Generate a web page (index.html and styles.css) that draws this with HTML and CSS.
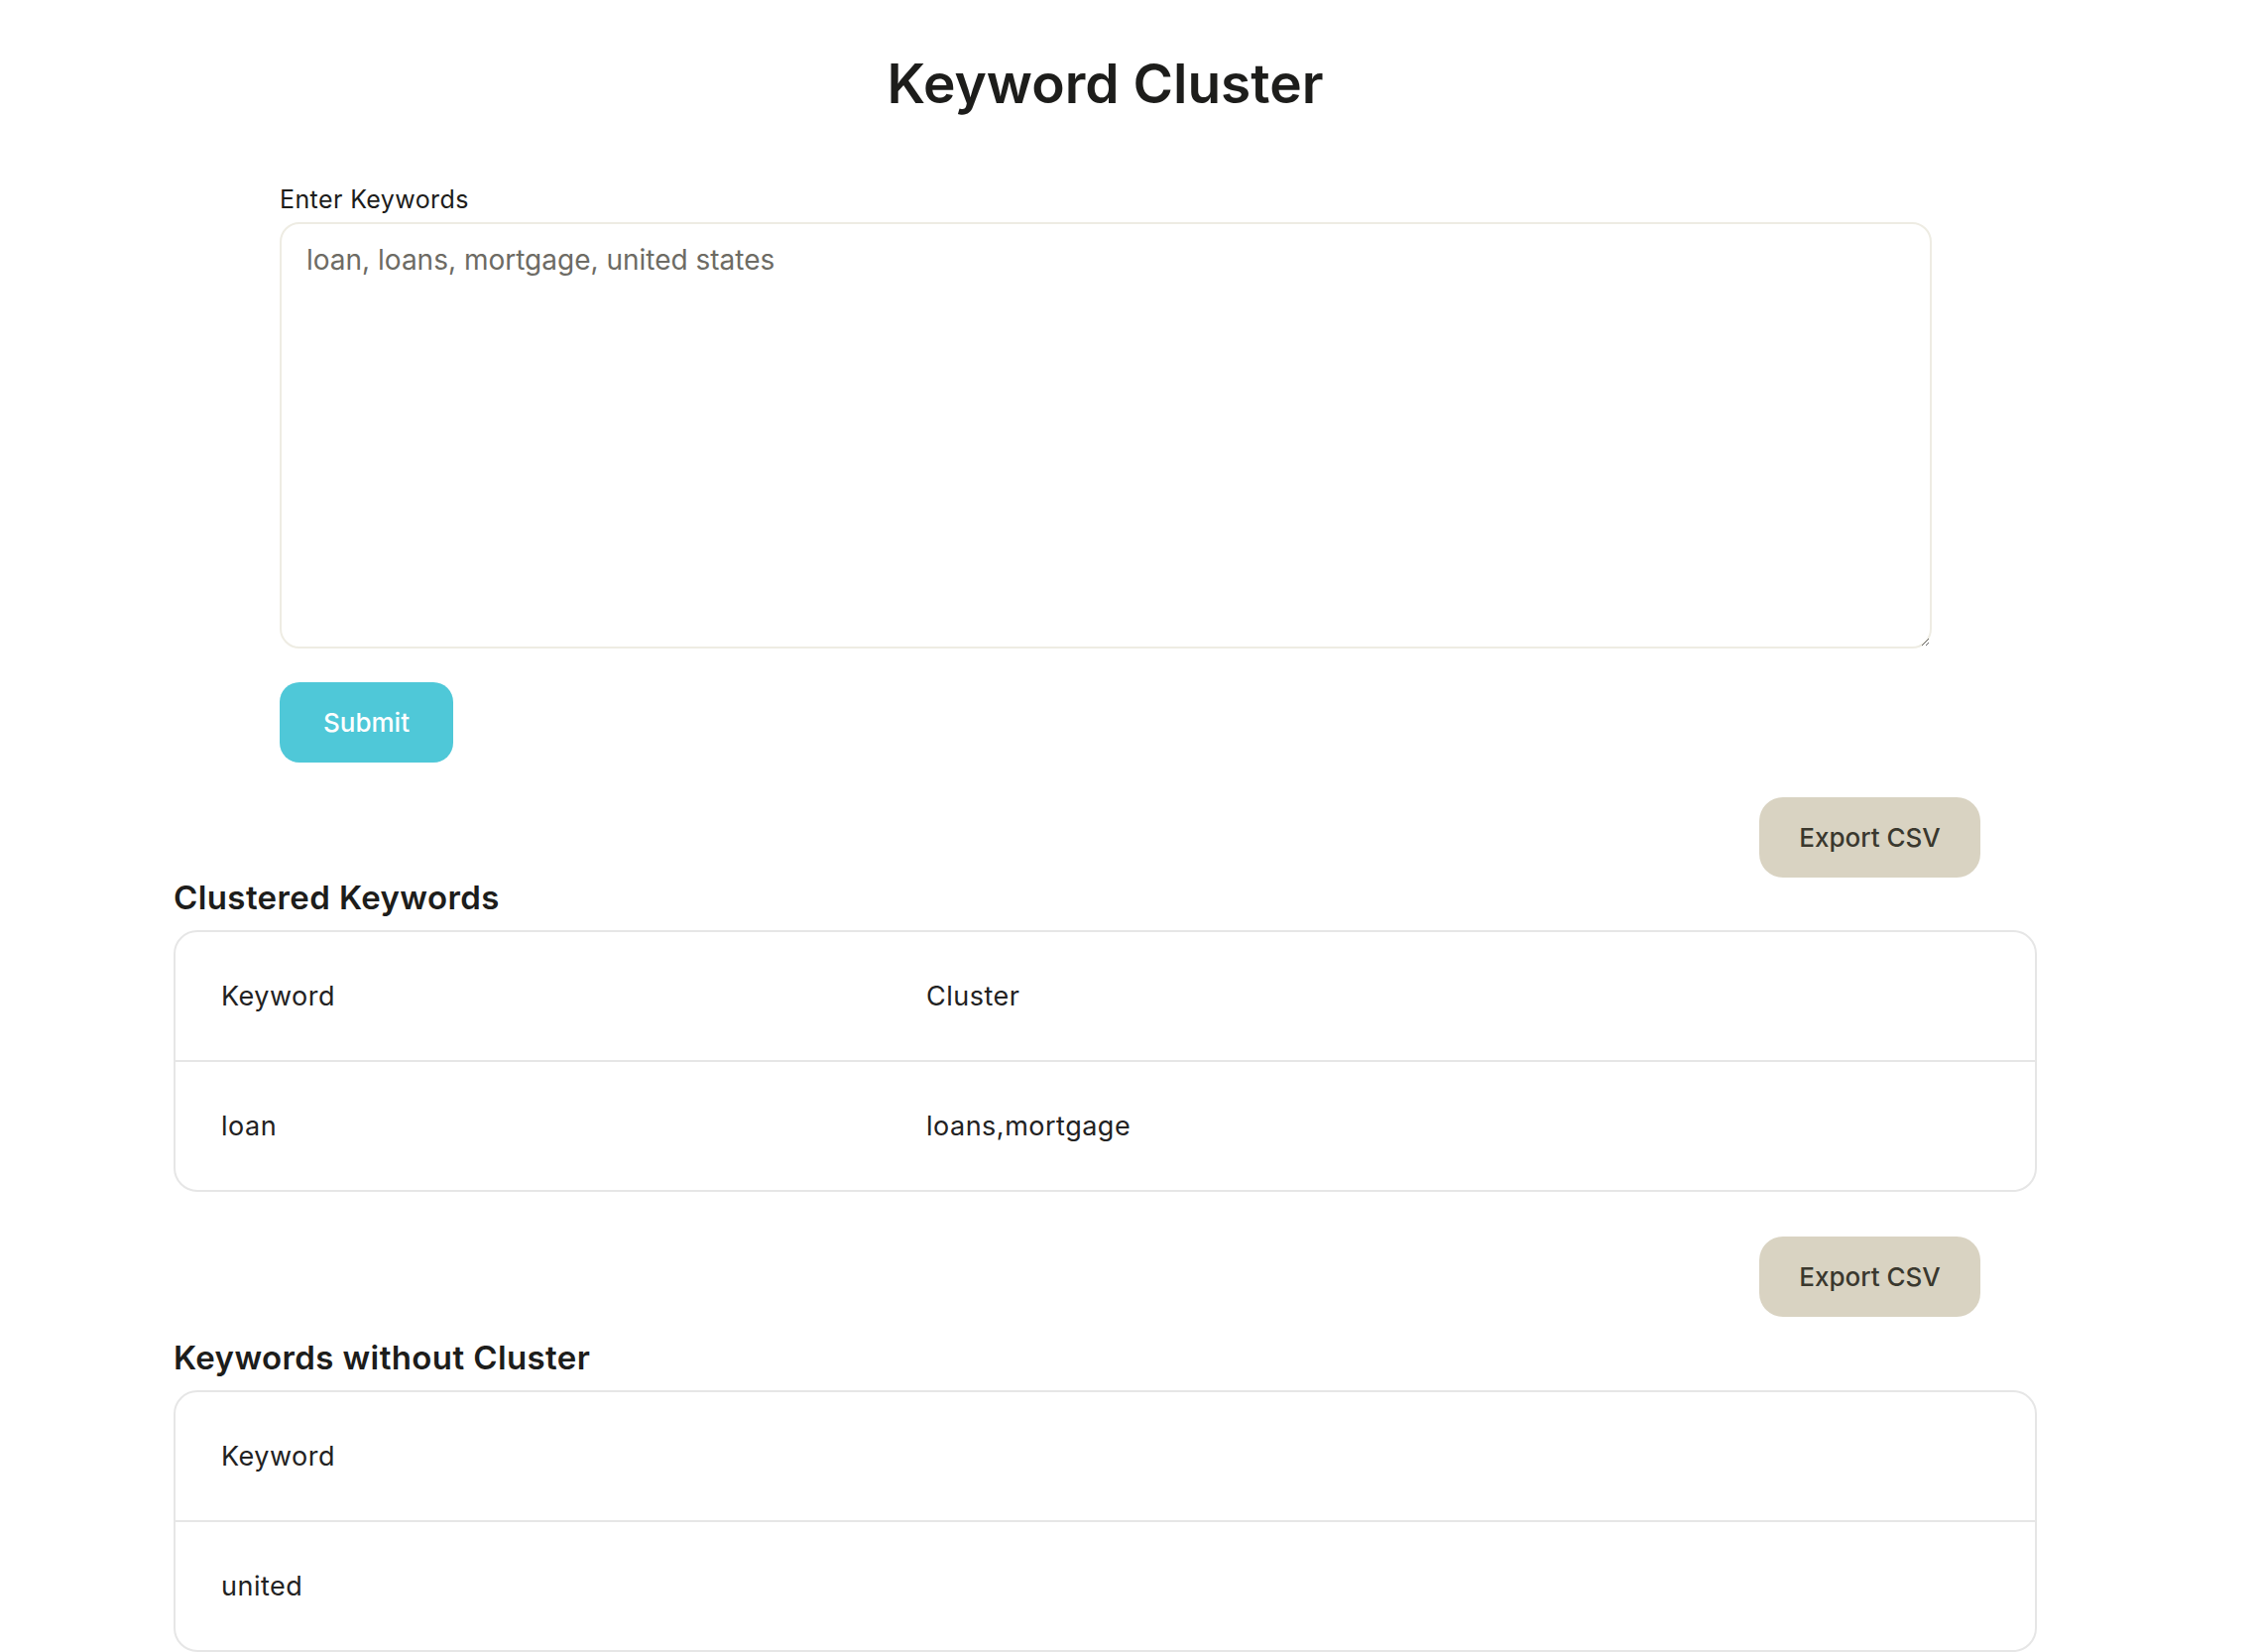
FILE: index.html
```
<!DOCTYPE html>
<html lang="en">
<head>
    <meta charset="UTF-8">
    <meta name="viewport" content="width=device-width, initial-scale=1.0">
    <title>Keyword Cluster</title>
    <link rel="stylesheet" href="styles.css">
</head>
<body>
    <div class="page">
        <h1>Keyword Cluster</h1>

        <form class="keyword-form" onsubmit="return false;">
            <label for="keywords">Enter Keywords</label>
            <textarea id="keywords" placeholder="loan, loans, mortgage, united states"></textarea>
            <button type="submit" class="submit-btn">Submit</button>
        </form>

        <div class="results first">
            <div class="export-row">
                <button class="export-btn">Export CSV</button>
            </div>
            <h2>Clustered Keywords</h2>
            <table class="kw-table">
                <tr>
                    <th class="col-keyword">Keyword</th>
                    <th>Cluster</th>
                </tr>
                <tr>
                    <td class="col-keyword">loan</td>
                    <td>loans,mortgage</td>
                </tr>
            </table>
        </div>

        <div class="results second">
            <div class="export-row">
                <button class="export-btn">Export CSV</button>
            </div>
            <h2>Keywords without Cluster</h2>
            <table class="kw-table">
                <tr>
                    <th>Keyword</th>
                </tr>
                <tr>
                    <td>united</td>
                </tr>
            </table>
        </div>
    </div>
</body>
</html>
```

FILE: styles.css
```
body {
    margin: 0;
    background: #fff;
    color: #222;
    font-family: Inter, "Noto Sans", sans-serif;
}
.page {
    width: 1879px;
    margin-left: 175px;
    padding-bottom: 40px;
}
h1 {
    margin: 51px 0 0;
    font-size: 55px;
    line-height: 67px;
    font-weight: 600;
    text-align: center;
    color: #1d1d1b;
}
.keyword-form {
    margin: 64px 106px 0 107px;
}
.keyword-form label {
    display: block;
    font-size: 25px;
    line-height: 39px;
    letter-spacing: 0.4px;
    margin-bottom: 3px;
    color: #1d1d1b;
}
textarea {
    display: block;
    width: 100%;
    height: 430px;
    box-sizing: border-box;
    padding: 17px 25px;
    border: 2px solid #eeece3;
    border-radius: 20px;
    font-family: inherit;
    font-size: 28px;
    line-height: 39px;
    color: #333;
    outline: none;
}
textarea::placeholder {
    color: #6d6b64;
}
.submit-btn {
    display: block;
    margin-top: 34px;
    width: 175px;
    height: 81px;
    border: none;
    border-radius: 20px;
    background: #4fc8d8;
    color: #fff;
    font-family: inherit;
    font-size: 26px;
    font-weight: 500;
    cursor: pointer;
}
.export-row {
    display: flex;
    justify-content: flex-end;
    padding-right: 57px;
}
.export-btn {
    width: 223px;
    height: 81px;
    border: none;
    border-radius: 24px;
    background: #d9d3c2;
    color: #3a382e;
    font-family: inherit;
    font-size: 26px;
    font-weight: 500;
    cursor: pointer;
}
.results.first { margin-top: 35px; }
.results.second { margin-top: 45px; }
h2 {
    margin: 0 0 13px;
    font-size: 33px;
    line-height: 40px;
    font-weight: 600;
    letter-spacing: 0.4px;
    color: #1d1d1b;
}
.results.second h2 { margin-top: 21px; }
.kw-table {
    width: 100%;
    table-layout: fixed;
    border-collapse: separate;
    border-spacing: 0;
    border: 2px solid #e6e6e6;
    border-radius: 24px;
}
.kw-table th,
.kw-table td {
    height: 129px;
    padding: 0 46px;
    text-align: left;
    font-weight: 400;
    font-size: 27px;
    letter-spacing: 0.5px;
    color: #222;
    box-sizing: border-box;
}
.kw-table td {
    height: 131px;
    border-top: 2px solid #e6e6e6;
}
.kw-table .col-keyword {
    width: 711px;
}
```
